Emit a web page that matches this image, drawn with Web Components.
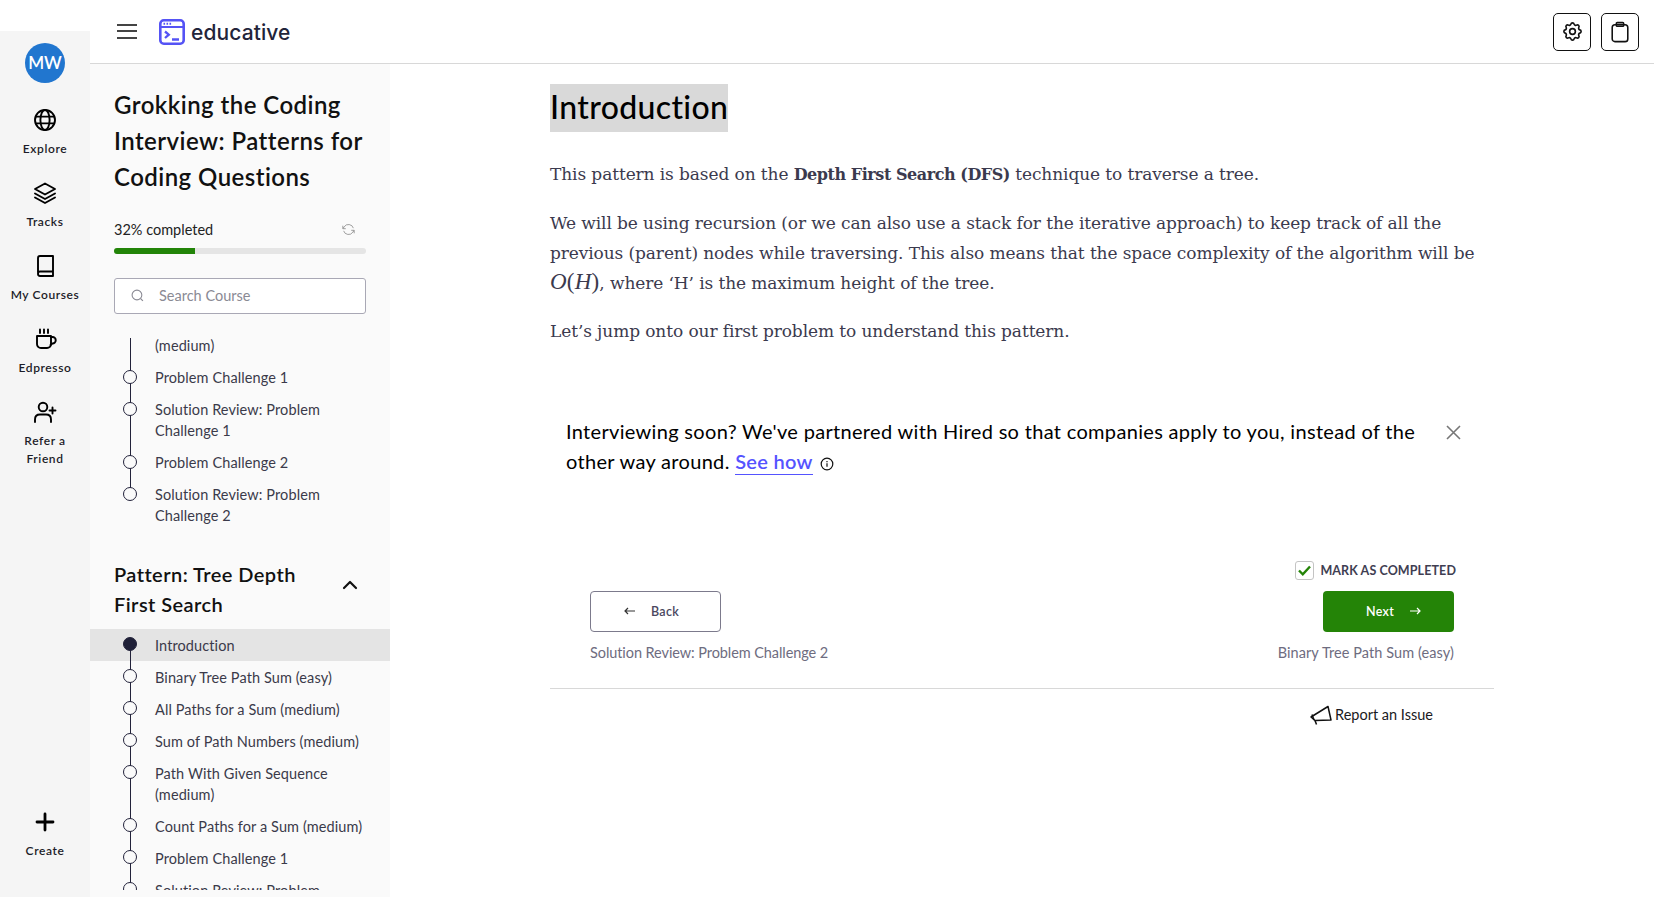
<!DOCTYPE html>
<html lang="en">
<head>
<meta charset="utf-8">
<title>Introduction - Grokking the Coding Interview</title>
<style>
  html, body { margin: 0; height: 100%; overflow: hidden; background: #fff; }
  body { font-family: Lato, "Noto Sans", sans-serif; --ui: Lato, "Noto Sans", sans-serif; }
</style>
</head>
<body>
<lesson-page></lesson-page>

<script>
// small helper, every component keeps its markup + styles in its own shadow root
const shadowOf = (el, html) => {
    const t = document.createElement('template');
    t.innerHTML = html;
    el.attachShadow({ mode: 'open' }).appendChild(t.content.cloneNode(true));
};

const ICONS = {
    globe: '<circle cx="12" cy="12" r="10"/><ellipse cx="12" cy="12" rx="4.6" ry="10"/><path d="M2.8 8.6h18.4M2.8 15.4h18.4"/>',
    layers: '<path d="M12 2.5 22 8l-10 5.5L2 8z"/><path d="M2 12.5l10 5.5 10-5.5"/><path d="M2 16.5l10 5.5 10-5.5"/>',
    book: '<path d="M5 18.5V4.2C5 3 5.8 2 7 2h13v20H7c-1.2 0-2-1-2-2.2s.8-2.3 2-2.3h13"/>',
    coffee: '<path d="M4 9h14v8a4 4 0 0 1-4 4H8a4 4 0 0 1-4-4z"/><path d="M18 10h1.500a2.900 2.900 0 0 1 0 6.500L17.500 18"/><path d="M7 2.500V6M11 2.500V6M15 2.500V6"/>',
    userplus: '<circle cx="10" cy="7" r="4.300"/><path d="M2 22v-2.500C2 16 4.500 14.500 7 14.500h6c2.500 0 5 1.500 5 5V22"/><path d="M19.500 7.500v6M16.500 10.500h6"/>',
    plus: '<path d="M12 4v16M4 12h16"/>'
};

class AppHeader extends HTMLElement {
    constructor() {
        super();
        shadowOf(this, `
        <style>
            :host { display: flex; align-items: center; height: 63px; border-bottom: 1px solid #d8d8d8; background: #fff; padding-left: 117px; padding-right: 15px; box-sizing: content-box; position: relative; }
            :host::before { content: ''; position: absolute; left: 0; top: 31px; bottom: -1px; width: 90px; background: #f5f5f5; }
            .burger { width: 20px; height: 11px; border-top: 2px solid #444; border-bottom: 2px solid #444; position: relative; margin-top: -1px; }
            .burger::after { content: ''; position: absolute; left: 0; right: 0; top: 4.500px; height: 2px; background: #444; }
            .logo { margin-left: 22px; width: 26px; height: 26px; }
            .word { margin: 1px 0 0 6px; font: 500 21px Inter, sans-serif; color: #22243a; letter-spacing: .1px; }
            .right { margin-left: auto; display: flex; gap: 10px; }
            button { width: 38px; height: 38px; padding: 0; display: flex; align-items: center; justify-content: center; background: #fff; border: 1px solid #111; border-radius: 5px; }
        </style>
        <div class="burger"></div>
        <svg class="logo" viewBox="0 0 26 26" fill="none" stroke="#5553f5" stroke-width="2.600">
            <rect x="1.300" y="1.300" width="23.400" height="23.400" rx="3.500"/>
            <path d="M1.500 8h23" stroke-width="2"/>
            <path d="M4.500 4.700h1.600M7.500 4.700h1.600M10.500 4.700h1.600" stroke-width="2"/>
            <path d="M6 12.500l3.800 3.200L6 19M13 20.500h7" stroke-width="2.300"/>
        </svg>
        <span class="word">educative</span>
        <div class="right">
            <button aria-label="Settings"><svg width="23" height="23" viewBox="0 0 24 24" fill="none" stroke="#111" stroke-width="1.700" stroke-linejoin="round"><path d="M10.325 4.317c.426-1.756 2.924-1.756 3.350 0a1.724 1.724 0 002.573 1.066c1.543-.94 3.310.826 2.370 2.370a1.724 1.724 0 001.065 2.572c1.756.426 1.756 2.924 0 3.350a1.724 1.724 0 00-1.066 2.573c.94 1.543-.826 3.310-2.370 2.370a1.724 1.724 0 00-2.572 1.065c-.426 1.756-2.924 1.756-3.350 0a1.724 1.724 0 00-2.573-1.066c-1.543.94-3.310-.826-2.370-2.370a1.724 1.724 0 00-1.065-2.572c-1.756-.426-1.756-2.924 0-3.350a1.724 1.724 0 001.066-2.573c-.94-1.543.826-3.310 2.370-2.370.996.608 2.296.07 2.572-1.065z"/><circle cx="12" cy="12" r="3"/></svg></button>
            <button aria-label="Notes"><svg width="22" height="22" viewBox="0 0 24 24" fill="none" stroke="#111" stroke-width="1.700"><rect x="3.500" y="4" width="17" height="18.500" rx="3"/><rect x="8" y="1.800" width="8" height="4" rx="1"/></svg></button>
        </div>`);
    }
}

class RailItem extends HTMLElement {
    constructor() {
        super();
        const icon = ICONS[this.getAttribute('icon')];
        shadowOf(this, `
        <style>
            :host { display: flex; flex-direction: column; align-items: center; width: 90px; }
            svg { width: 24px; height: 24px; margin-bottom: 8px; }
            span { font: 600 12px/18px var(--ui); letter-spacing: .6px; color: #1c1c28; text-align: center; width: 80px; }
        </style>
        <svg viewBox="0 0 24 24" fill="none" stroke="#000" stroke-width="${this.getAttribute('icon') === 'plus' ? 2.800 : 1.900}" stroke-linecap="round" stroke-linejoin="round">${icon}</svg>
        <span><slot></slot></span>`);
    }
}

class NavRail extends HTMLElement {
    constructor() {
        super();
        shadowOf(this, `
        <style>
            :host { display: flex; flex-direction: column; align-items: center; width: 90px; flex: none; background: #f5f5f5; box-sizing: border-box; padding-bottom: 37px; gap: 23px; }
            .avatar { width: 40px; height: 40px; border-radius: 50%; background: #2176cf; color: #fff; font: 600 17px/40px var(--ui); text-align: center; margin: -21px 0 2px; position: relative; }
            ::slotted(.end) { margin-top: auto; }
        </style>
        <div class="avatar">MW</div>
        <slot></slot>`);
    }
}

class LessonRow extends HTMLElement {
    constructor() {
        super();
        shadowOf(this, `
        <style>
            :host { display: block; position: relative; padding: 5.500px 20px 5.500px 65px; font: 400 14.500px/21px var(--ui); letter-spacing: .1px; color: #3b3a4a; }
            :host([active]) { background: #e4e4e4; }
            .line { position: absolute; left: 40px; top: 0; bottom: 0; width: 1px; background: #22223a; }
            .dot { position: absolute; left: 33px; top: 8px; width: 12px; height: 12px; border: 1px solid #22223a; border-radius: 50%; background: #fafafa; }
            :host([active]) .dot { background: #1f2038; }
            :host([active]) .line { top: 15px; }
            :host([last]) .line { bottom: auto; height: 15px; }
            :host([plain]) .dot { display: none; }
        </style>
        <div class="line"></div><div class="dot"></div><slot></slot>`);
    }
}

class CourseSidebar extends HTMLElement {
    constructor() {
        super();
        shadowOf(this, `
        <style>
            :host { display: flex; flex-direction: column; width: 300px; flex: none; background: #fafafa; box-sizing: border-box; padding-top: 23px; padding-bottom: 7px; min-height: 0; }
            .pad { padding: 0 24px; }
            h1 { margin: 0; font: 600 24px/36px var(--ui); letter-spacing: .45px; color: #111; }
            .prog { display: flex; justify-content: space-between; align-items: center; margin-top: 23.500px; font: 400 14.500px/21px var(--ui); color: #222; }
            .bar { height: 6px; margin-top: 8px; border-radius: 3px; background: #e5e5e5; overflow: hidden; }
            .bar i { display: block; width: 32%; height: 100%; background: #228408; }
            .search { display: flex; align-items: center; box-sizing: border-box; height: 36px; margin-top: 24px; border: 1px solid #a9a8b5; border-radius: 3px; background: #fff; padding-left: 16px; font: 400 14.500px var(--ui); color: #8a8a94; gap: 15px; }
            .list { flex: 1; min-height: 0; overflow: hidden; margin-top: 24px; }
        </style>
        <div class="pad">
            <h1>Grokking the Coding Interview: Patterns for Coding Questions</h1>
            <div class="prog"><span>32% completed</span>
                <svg width="13" height="13" viewBox="0 0 24 24" fill="none" stroke="#777" stroke-width="1.300" style="margin-right:11px"><path d="M21 9.500A9.500 9.500 0 0 0 4 7L2 10M3 14.500A9.500 9.500 0 0 0 20 17l2-3"/><path d="M1.500 5v5.500H7M22.500 19v-5.500H17"/></svg>
            </div>
            <div class="bar"><i></i></div>
            <div class="search">
                <svg width="13" height="13" viewBox="0 0 24 24" fill="none" stroke="#8a8a94" stroke-width="2"><circle cx="11" cy="11" r="9"/><path d="M18 18l4 4"/></svg>
                <span>Search Course</span>
            </div>
        </div>
        <div class="list"><slot></slot></div>`);
    }
}

class SectionHead extends HTMLElement {
    constructor() {
        super();
        shadowOf(this, `
        <style>
            :host { display: flex; align-items: flex-start; padding: 0 32px 0 24px; margin: 27.500px 0 10px; font: 600 20px/30px var(--ui); letter-spacing: .44px; color: #111; }
            span { flex: 1; max-width: 215px; }
            svg { margin: 21px 0 0 auto; }
        </style>
        <span><slot></slot></span>
        <svg width="16" height="10" viewBox="0 0 16 10" fill="none" stroke="#111" stroke-width="2.200" stroke-linecap="round" stroke-linejoin="round"><path d="M2 8l6-6 6 6"/></svg>`);
    }
}

class LessonBody extends HTMLElement {
    constructor() {
        super();
        shadowOf(this, `
        <style>
            :host { display: block; }
            h2 { display: inline-block; margin: 0; background: #d9d9d9; font: 500 32px/46px var(--ui); padding-bottom: 2px; letter-spacing: .35px; color: #000; }
            .prose { margin-top: 27px; font: 400 17px/30px "DejaVu Serif", serif; color: #3b3a4e; letter-spacing: -.1px; }
            ::slotted(p) { margin: 0 0 18px; }
        </style>
        <h2>Introduction</h2>
        <div class="prose"><slot></slot></div>`);
    }
}

class HireBanner extends HTMLElement {
    constructor() {
        super();
        shadowOf(this, `
        <style>
            :host { display: flex; align-items: flex-start; padding: 0 33px 0 16px; margin-top: 69.500px; font: 400 20px/30px var(--ui); letter-spacing: .32px; color: #000; }
            .txt { flex: 1; }
            a { color: #5553ff; font-weight: 600; text-decoration: none; border-bottom: 1px solid #5553ff; padding-bottom: 1px; }
            .info { vertical-align: -2px; margin-left: 2px; }
            .x { margin-top: 9px; flex: none; }
        </style>
        <div class="txt">Interviewing soon? We've partnered with Hired so that companies apply to you, instead of the<br>other way around. <a>See how</a>
            <svg class="info" width="14" height="14" viewBox="0 0 14 14" fill="none" stroke="#111" stroke-width="1.200"><circle cx="7" cy="7" r="5.800"/><path d="M7 6.300v3.500M7 4v1.200"/></svg>
        </div>
        <svg class="x" width="15" height="15" viewBox="0 0 15 15" stroke="#777" stroke-width="1.600" fill="none"><path d="M1 1l13 13M14 1 1 14"/></svg>`);
    }
}

class LessonPager extends HTMLElement {
    constructor() {
        super();
        shadowOf(this, `
        <style>
            :host { display: block; margin-top: 86px; font-family: var(--ui); }
            .mark { display: flex; justify-content: flex-end; align-items: center; padding-right: 38px; height: 18px; gap: 6px; font: 700 12.500px var(--ui); color: #3f3e52; letter-spacing: .1px; }
            .check { width: 17px; height: 17px; border: 1px solid #c4c4c4; border-radius: 3px; display: flex; align-items: center; justify-content: center; }
            .row { display: flex; justify-content: space-between; padding: 11px 40px 0; }
            .col { display: flex; flex-direction: column; }
            .col.r { align-items: flex-end; }
            .btn { width: 131px; height: 41px; box-sizing: border-box; border-radius: 4px; display: flex; align-items: center; justify-content: center; gap: 16px; font: 600 12.500px var(--ui); letter-spacing: .3px; }
            .back { border: 1px solid #7c7a8c; color: #4a4860; padding-right: 8px; }
            .next { background: #248407; color: #fff; padding-left: 10px; }
            .cap { margin-top: 10px; font: 400 14.500px/21px var(--ui); color: #6e6c80; }
            .rule { border-top: 1px solid #d8d8d8; margin-top: 25px; }
            .report { display: flex; justify-content: flex-end; align-items: center; gap: 3px; padding: 15px 61px 0 0; font: 400 14.500px/22px var(--ui); color: #1a1a22; }
        </style>
        <div class="mark">
            <span class="check"><svg width="13" height="11" viewBox="0 0 13 11" fill="none" stroke="#248407" stroke-width="2.400"><path d="M1 5.500l3.800 3.800L12 1.500"/></svg></span>
            MARK AS COMPLETED
        </div>
        <div class="row">
            <div class="col">
                <div class="btn back"><svg width="11" height="8" viewBox="0 0 11 8" fill="none" stroke="#333" stroke-width="1.200"><path d="M11 4H1M4 1 1 4l3 3"/></svg><span>Back</span></div>
                <span class="cap" style="letter-spacing:-.08px">Solution Review: Problem Challenge 2</span>
            </div>
            <div class="col r">
                <div class="btn next"><span>Next</span><svg width="11" height="8" viewBox="0 0 11 8" fill="none" stroke="#fff" stroke-width="1.200"><path d="M0 4h10M7 1l3 3-3 3"/></svg></div>
                <span class="cap" style="letter-spacing:.08px">Binary Tree Path Sum (easy)</span>
            </div>
        </div>
        <div class="rule"></div>
        <div class="report">
            <svg width="22" height="20" viewBox="0 0 22 20" fill="none" stroke="#111" stroke-width="1.500" stroke-linejoin="round"><path d="M1 12 18 1.500 21 15 5 15.500z"/><path d="M5 15.500l1.500 4"/><path d="M2 9.500l2 5.500"/></svg>
            <span>Report an Issue</span>
        </div>`);
    }
}

class LessonPage extends HTMLElement {
    constructor() {
        super();
        shadowOf(this, `
        <style>
            :host { display: flex; flex-direction: column; height: 897px; overflow: hidden; }
            .under { flex: 1; min-height: 0; display: flex; position: relative; }
            main { flex: 1; min-width: 0; padding-top: 20px; }
            .col { width: 944px; margin: 0 auto; }
        </style>
        <app-header></app-header>
        <div class="under">
            <nav-rail>
                <rail-item icon="globe">Explore</rail-item>
                <rail-item icon="layers">Tracks</rail-item>
                <rail-item icon="book">My Courses</rail-item>
                <rail-item icon="coffee">Edpresso</rail-item>
                <rail-item icon="userplus">Refer a Friend</rail-item>
                <rail-item icon="plus" class="end">Create</rail-item>
            </nav-rail>
            <course-sidebar>
                <lesson-row plain style="margin-top:-8px">(medium)</lesson-row>
                <lesson-row>Problem Challenge 1</lesson-row>
                <lesson-row>Solution Review: Problem Challenge 1</lesson-row>
                <lesson-row>Problem Challenge 2</lesson-row>
                <lesson-row last>Solution Review: Problem Challenge 2</lesson-row>
                <section-head>Pattern: Tree Depth First Search</section-head>
                <lesson-row active>Introduction</lesson-row>
                <lesson-row>Binary Tree Path Sum (easy)</lesson-row>
                <lesson-row>All Paths for a Sum (medium)</lesson-row>
                <lesson-row>Sum of Path Numbers (medium)</lesson-row>
                <lesson-row>Path With Given Sequence (medium)</lesson-row>
                <lesson-row>Count Paths for a Sum (medium)</lesson-row>
                <lesson-row>Problem Challenge 1</lesson-row>
                <lesson-row>Solution Review: Problem Challenge 1</lesson-row>
            </course-sidebar>
            <main><div class="col">
                <lesson-body>
                    <p>This pattern is based on the <b style="font-size:16px;letter-spacing:-.45px">Depth First Search (DFS)</b> technique to traverse a tree.</p>
                    <p>We will be using recursion (or we can also use a stack for the iterative approach) to keep track of all the<br>previous (parent) nodes while traversing. This also means that the space complexity of the algorithm will be<br><span style="font-family:'Liberation Serif',serif;font-size:23px;line-height:0;letter-spacing:.2px"><i>O</i>(<i>H</i>)</span>, where ‘H’ is the maximum height of the tree.</p>
                    <p>Let’s jump onto our first problem to understand this pattern.</p>
                </lesson-body>
                <hire-banner></hire-banner>
                <lesson-pager></lesson-pager>
            </div></main>
        </div>`);
    }
}

customElements.define('app-header', AppHeader);
customElements.define('rail-item', RailItem);
customElements.define('nav-rail', NavRail);
customElements.define('lesson-row', LessonRow);
customElements.define('course-sidebar', CourseSidebar);
customElements.define('section-head', SectionHead);
customElements.define('lesson-body', LessonBody);
customElements.define('hire-banner', HireBanner);
customElements.define('lesson-pager', LessonPager);
customElements.define('lesson-page', LessonPage);
</script>
</body>
</html>
